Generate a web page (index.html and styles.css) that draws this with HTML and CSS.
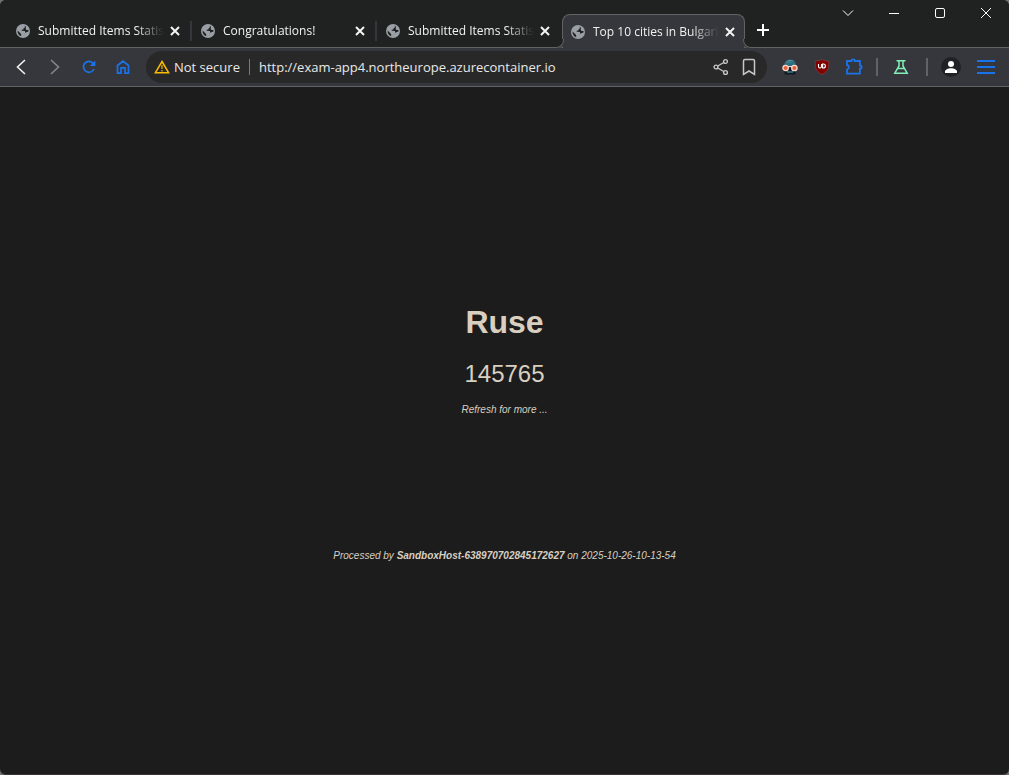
FILE: index.html
```html
<!DOCTYPE html>
<html lang="en">
<head>
<meta charset="utf-8">
<title>Top 10 cities in Bulgaria</title>
<link rel="stylesheet" href="styles.css">
</head>
<body>
<svg class="sprite" aria-hidden="true">
  <symbol id="globe" viewBox="0 0 14 14">
    <circle cx="7" cy="7" r="7" fill="#9aa0a6"/>
    <path d="M7.600 1.500C9 2 9.500 3 8.800 3.600L7.600 4.200 7.400 5.400 5.600 5.800 5.800 6.800 8.600 7 9.400 8.600 8.200 10 7.800 11.800 6.800 12.600 5 12.200 5.400 10.600 4.400 9.200 1.600 6.600 1.700 8.400C2.400 11 4.600 12.500 7 12.500L7.900 11.600 8.300 10.100 9.800 8.600 12.400 7.600 12.500 6 10.400 6 9.700 4.500 10 2.600Z" fill="#202221"/>
    <path d="M5.900 7 8.600 7.100 9.300 8.600 8.200 10 7.700 11.700 6.200 11.900 5.500 10.500 6.600 9.600Z" fill="#9aa0a6"/>
  </symbol>
  <symbol id="cross" viewBox="0 0 14 14">
    <path d="M3 3l8 8M11 3l-8 8" stroke="#f4f4f4" stroke-width="2" fill="none"/>
  </symbol>
</svg>
<div class="window">
  <header class="strip">
    <div class="tabs">
      <div class="tab">
        <button class="tab-title" type="button"><svg class="globe"><use href="#globe"/></svg><span class="fade">Submitted Items Statis</span></button>
        <button class="close" type="button" aria-label="Close tab"><svg class="cross"><use href="#cross"/></svg></button>
      </div>
      <div class="tab">
        <button class="tab-title" type="button"><svg class="globe"><use href="#globe"/></svg><span class="fade">Congratulations!</span></button>
        <button class="close" type="button" aria-label="Close tab"><svg class="cross"><use href="#cross"/></svg></button>
      </div>
      <div class="tab last">
        <button class="tab-title" type="button"><svg class="globe"><use href="#globe"/></svg><span class="fade">Submitted Items Statis</span></button>
        <button class="close" type="button" aria-label="Close tab"><svg class="cross"><use href="#cross"/></svg></button>
      </div>
      <div class="tab active">
        <button class="tab-title" type="button"><svg class="globe"><use href="#globe"/></svg><span class="fade">Top 10 cities in Bulgari</span></button>
        <button class="close" type="button" aria-label="Close tab"><svg class="cross"><use href="#cross"/></svg></button>
      </div>
      <button class="new-tab" type="button" aria-label="New tab"><svg width="12" height="12" viewBox="0 0 12 12"><path d="M6 0v12M0 6h12" stroke="#fff" stroke-width="2"/></svg></button>
    </div>
    <div class="controls">
      <button type="button" aria-label="Search tabs"><svg width="12" height="12" viewBox="0 0 12 12"><path d="M1 3.500l5 5 5-5"/></svg></button>
      <button type="button" aria-label="Minimize"><svg width="12" height="12" viewBox="0 0 12 12"><path d="M1 6.500h10"/></svg></button>
      <button type="button" aria-label="Maximize"><svg width="12" height="12" viewBox="0 0 12 12"><rect x="1.500" y="1.500" width="9" height="9" rx="1.500"/></svg></button>
      <button type="button" aria-label="Close"><svg width="12" height="12" viewBox="0 0 12 12"><path d="M1 1l10 10M11 1L1 11"/></svg></button>
    </div>
  </header>
  <nav class="toolbar">
    <div class="nav">
      <button type="button" aria-label="Back"><svg width="16" height="16" viewBox="0 0 16 16"><path d="M12 1L4.500 8l7.500 7" fill="none" stroke="#f0f0f0" stroke-width="1.600"/></svg></button>
      <button type="button" aria-label="Forward"><svg width="16" height="16" viewBox="0 0 16 16"><path d="M4 1l7.500 7L4 15" fill="none" stroke="#85868a" stroke-width="1.600"/></svg></button>
      <button type="button" aria-label="Reload"><svg width="16" height="16" viewBox="0 0 16 16"><path d="M13 10A5.500 5.500 0 1 1 12.300 4.400L13.500 6" fill="none" stroke="#1a73e8" stroke-width="1.700"/><path d="M14.300 1.500v5.500H8.800z" fill="#1a73e8"/></svg></button>
      <button type="button" aria-label="Home"><svg width="16" height="16" viewBox="0 0 16 16"><path d="M2.500 14.200V6.500L8 2l5.500 4.500v7.700H10V8.800H6v5.400z" fill="none" stroke="#1a73e8" stroke-width="1.700"/></svg></button>
    </div>
    <div class="address">
      <svg width="16" height="14" viewBox="0 0 16 14"><path d="M8 1.500L14.600 12.700H1.400z" fill="none" stroke="#fbbc04" stroke-width="1.500"/><path d="M8 5v4M8 10v1.500" stroke="#d39c05" stroke-width="1.500"/></svg>
      <label class="security" for="url">Not secure</label>
      <span class="bar"></span>
      <input id="url" class="url" type="text" value="http://exam-app4.northeurope.azurecontainer.io">
      <button type="button" aria-label="Share"><svg width="16" height="18" viewBox="0 0 16 18"><g fill="none" stroke="#c4c6c8" stroke-width="1.400"><circle cx="12.500" cy="3.500" r="1.900"/><circle cx="12.500" cy="14.500" r="1.900"/><circle cx="3" cy="9" r="1.900"/><path d="M4.700 8l6.100-3.500M4.700 10l6.100 3.500"/></g></svg></button>
      <button type="button" aria-label="Bookmark"><svg width="16" height="18" viewBox="0 0 16 18"><path d="M2.500 16.500V3a1.500 1.500 0 0 1 1.500-1.500h8A1.500 1.500 0 0 1 13.500 3v13.500L8 13z" fill="none" stroke="#c4c6c8" stroke-width="1.500"/></svg></button>
    </div>
    <div class="extensions">
      <button type="button" aria-label="Reader extension"><svg width="16" height="16" viewBox="0 0 16 16"><path d="M2 8C2 3 4.500.5 8.500.5S14 3.500 14 8z" fill="#2e6f80"/><path d="M4 3h5M6 1.500h5" stroke="#4f8c9b"/><rect x="2.500" y="9" width="11" height="6.500" fill="#111820"/><path d="M5 13h6" stroke="#3f7f92" stroke-width="1.500"/><circle cx="3.600" cy="9" r="2.700" fill="#e6603e" stroke="#f6d9cc" stroke-width="1.300"/><circle cx="12.400" cy="9" r="2.700" fill="#e6603e" stroke="#f6d9cc" stroke-width="1.300"/><path d="M6 7.500h4" stroke="#f6d9cc"/></svg></button>
      <button type="button" aria-label="Content blocker"><svg width="16" height="16" viewBox="0 0 16 16"><path d="M8 .5c2 1.300 4.500 1.500 6.700 1.500 0 6.500.3 10-6.700 13.500C1 12 1.300 8.500 1.300 2 3.500 2 6 1.800 8 .5z" fill="#800000" stroke="#8f4548" stroke-width=".6"/><path d="M4.500 5v2.500a1.500 1.500 0 0 0 3 0V5M8.600 5v4h.8a2 2 0 0 0 0-4z" fill="none" stroke="#fff" stroke-width="1.100"/></svg></button>
      <button type="button" aria-label="Extensions"><svg width="18" height="18" viewBox="0 0 18 18"><path d="M2 3h4.500a1.700 1.700 0 0 1 3.400 0h5v4.300a1.700 1.700 0 0 1 0 3.400v5H2v-4a2.400 2.400 0 0 0 0-4.700z" fill="none" stroke="#1a73e8" stroke-width="1.800"/></svg></button>
      <span class="divider after-extensions"></span>
      <button class="labs" type="button" aria-label="Experiments"><svg width="16" height="16" viewBox="0 0 16 16"><path d="M3.500 1.800h9M6 2v5L1.800 14.200h12.400L10 7V2M5 9.500h6" fill="none" stroke="#81f0b8" stroke-width="1.500"/></svg></button>
      <span class="divider"></span>
      <button type="button" aria-label="Profile"><svg width="20" height="20" viewBox="0 0 20 20"><circle cx="10" cy="10" r="10" fill="#202124"/><circle cx="10" cy="7" r="3" fill="#fff"/><path d="M4 16v-1.500c0-2 3-3.300 6-3.300s6 1.300 6 3.300V16z" fill="#fff"/></svg></button>
      <button class="menu" type="button" aria-label="Menu"><svg width="18" height="16" viewBox="0 0 18 16"><path d="M0 2h18M0 8h18M0 14h18" stroke="#1a73e8" stroke-width="2"/></svg></button>
    </div>
  </nav>
  <main class="page">
    <h1 class="city">Ruse</h1>
    <p class="population">145765</p>
    <p class="note">Refresh for more ...</p>
    <p class="note host">Processed by <b>SandboxHost-638970702845172627</b> on 2025-10-26-10-13-54</p>
  </main>
</div>
</body>
</html>
```
FILE: styles.css
```css
* {
  box-sizing: border-box;
}

body {
  margin: 0;
  background: #6f7072;
  font-family: "Open Sans", "Noto Sans", sans-serif;
}

.sprite {
  display: none;
}

.window {
  display: flex;
  flex-direction: column;
  min-height: 100vh;
  overflow: hidden;
  background: #1c1c1c;
  border-bottom: 1px solid #3a343a;
  border-radius: 6px;
}

button {
  display: flex;
  align-items: center;
  justify-content: center;
  padding: 0;
  border: 0;
  background: none;
  color: inherit;
  font: inherit;
}

svg {
  flex: none;
}

.strip {
  display: flex;
  height: 48px;
  background: #202221;
  border-bottom: 1px solid #606264;
}

.tabs {
  display: flex;
  flex: 1;
  align-items: flex-end;
  min-width: 0;
  padding-left: 7px;
  color: #f1f1f1;
  font-size: 12px;
}

.tab {
  position: relative;
  display: flex;
  align-items: center;
  flex: 0 1 185px;
  min-width: 0;
  height: 34px;
  padding: 0 10px 0 9px;
  margin-bottom: -1px;
}

.tab:not(.last):not(.active)::after {
  position: absolute;
  right: 0;
  top: 7px;
  width: 2px;
  height: 20px;
  background: #36373c;
  content: "";
}

.tab.active {
  flex-basis: 183px;
  padding-right: 7px;
  padding-left: 8px;
  background: #36373c;
  border: 1px solid #606264;
  border-bottom: 0;
  border-radius: 8px 8px 0 0;
}

.active::before,
.active::after {
  position: absolute;
  bottom: 0;
  width: 8px;
  height: 8px;
  border: 0 solid #606264;
  background: #202221;
  content: "";
}

.active::before {
  left: -8px;
  border-width: 0 1px 1px 0;
  border-bottom-right-radius: 8px;
  box-shadow: 2px 0 0 #36373c;
}

.active::after {
  right: -8px;
  border-width: 0 0 1px 1px;
  border-bottom-left-radius: 8px;
  box-shadow: -2px 0 0 #36373c;
}

.tab-title {
  flex: 1;
  justify-content: flex-start;
  gap: 8px;
  min-width: 0;
}

.globe,
.cross {
  width: 14px;
  height: 14px;
}

.fade {
  flex: 1;
  overflow: hidden;
  line-height: 18px;
  text-align: left;
  white-space: nowrap;
  mask-image: linear-gradient(to right, #000 calc(100% - 28px), transparent);
}

.close {
  width: 14px;
  height: 14px;
  margin-left: 4px;
}

.new-tab {
  flex: none;
  width: 28px;
  height: 34px;
  margin-left: 4px;
}

.controls {
  display: flex;
}

.controls button {
  width: 46px;
  height: 26px;
}

.controls svg {
  fill: none;
  stroke: #fff;
}

.toolbar {
  display: flex;
  align-items: center;
  gap: 9px;
  height: 39px;
  padding: 0 9px 0 7px;
  background: #36373c;
  border-bottom: 1px solid #606264;
}

.toolbar button {
  width: 28px;
  height: 28px;
}

.nav {
  display: flex;
  gap: 6px;
}

.address {
  display: flex;
  align-items: center;
  flex: 1;
  height: 32px;
  padding: 0 4px 0 8px;
  background: #282828;
  border-radius: 16px;
  color: #e8e8e8;
  font-size: 13px;
}

.security {
  margin: 0 9px 0 4px;
  white-space: nowrap;
}

.bar {
  width: 1px;
  height: 16px;
  background: #77787a;
}

.url {
  flex: 1;
  min-width: 0;
  padding: 0 0 0 9px;
  border: 0;
  outline: 0;
  background: none;
  color: inherit;
  font: inherit;
}

.extensions {
  display: flex;
  align-items: center;
  gap: 4px;
}

.divider {
  width: 2px;
  height: 18px;
  margin: 0 5px;
  background: #606264;
}

.after-extensions {
  margin-left: 4px;
}

.labs {
  margin-right: 2px;
}

.menu {
  margin-left: 3px;
}

.page {
  display: flex;
  flex: 1;
  flex-direction: column;
  align-items: center;
  justify-content: center;
  padding-top: 4px;
  color: #d8cfc0;
  font-family: "Liberation Sans", Arial, sans-serif;
}

.city {
  margin: 0 0 20px;
  font-size: 32px;
  line-height: 36px;
}

.population {
  margin: 0 0 16px;
  font-size: 24px;
  line-height: 28px;
}

.note {
  margin: 0;
  font-size: 10px;
  font-style: italic;
  line-height: 12px;
}

.host {
  margin-top: 134px;
}
```
